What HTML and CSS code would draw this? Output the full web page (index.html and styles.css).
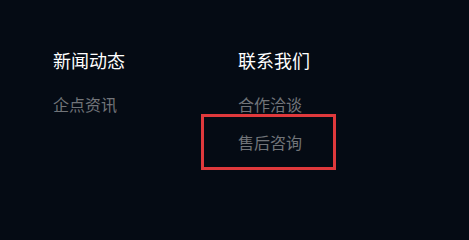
FILE: index.html
```html
<!DOCTYPE html>
<html lang="zh-CN">
<head>
<meta charset="utf-8">
<link rel="stylesheet" href="styles.css">
</head>
<body>
<footer class="footer">
  <div class="col">
    <h3 class="col-title">新闻动态</h3>
    <ul class="links">
      <li class="link">企点资讯</li>
    </ul>
  </div>
  <div class="col">
    <h3 class="col-title">联系我们</h3>
    <ul class="links">
      <li class="link">合作洽谈</li>
      <li class="link link-marked">售后咨询</li>
    </ul>
  </div>
</footer>
</body>
</html>
```
FILE: styles.css
```css
html, body {
  margin: 0;
  padding: 0;
  background: #050b14;
  height: 100%;
}
.footer {
  display: flex;
  padding: 51px 0 0 53px;
  font-family: "Noto Sans CJK SC", "Noto Sans", sans-serif;
}
.col {
  width: 185px;
}
.col-title {
  margin: 0 0 27px;
  font-size: 18px;
  line-height: 18px;
  font-weight: 400;
  color: #ffffff;
}
.links {
  list-style: none;
  margin: 0;
  padding: 0;
  display: flex;
  flex-direction: column;
  gap: 22px;
}
.link {
  font-size: 16px;
  line-height: 16px;
  color: #717479;
}
.link-marked {
  position: relative;
}
.link-marked::after {
  content: "";
  position: absolute;
  left: -37px;
  top: -20px;
  width: 129px;
  height: 50px;
  border: 3px solid #e0393c;
}
```
